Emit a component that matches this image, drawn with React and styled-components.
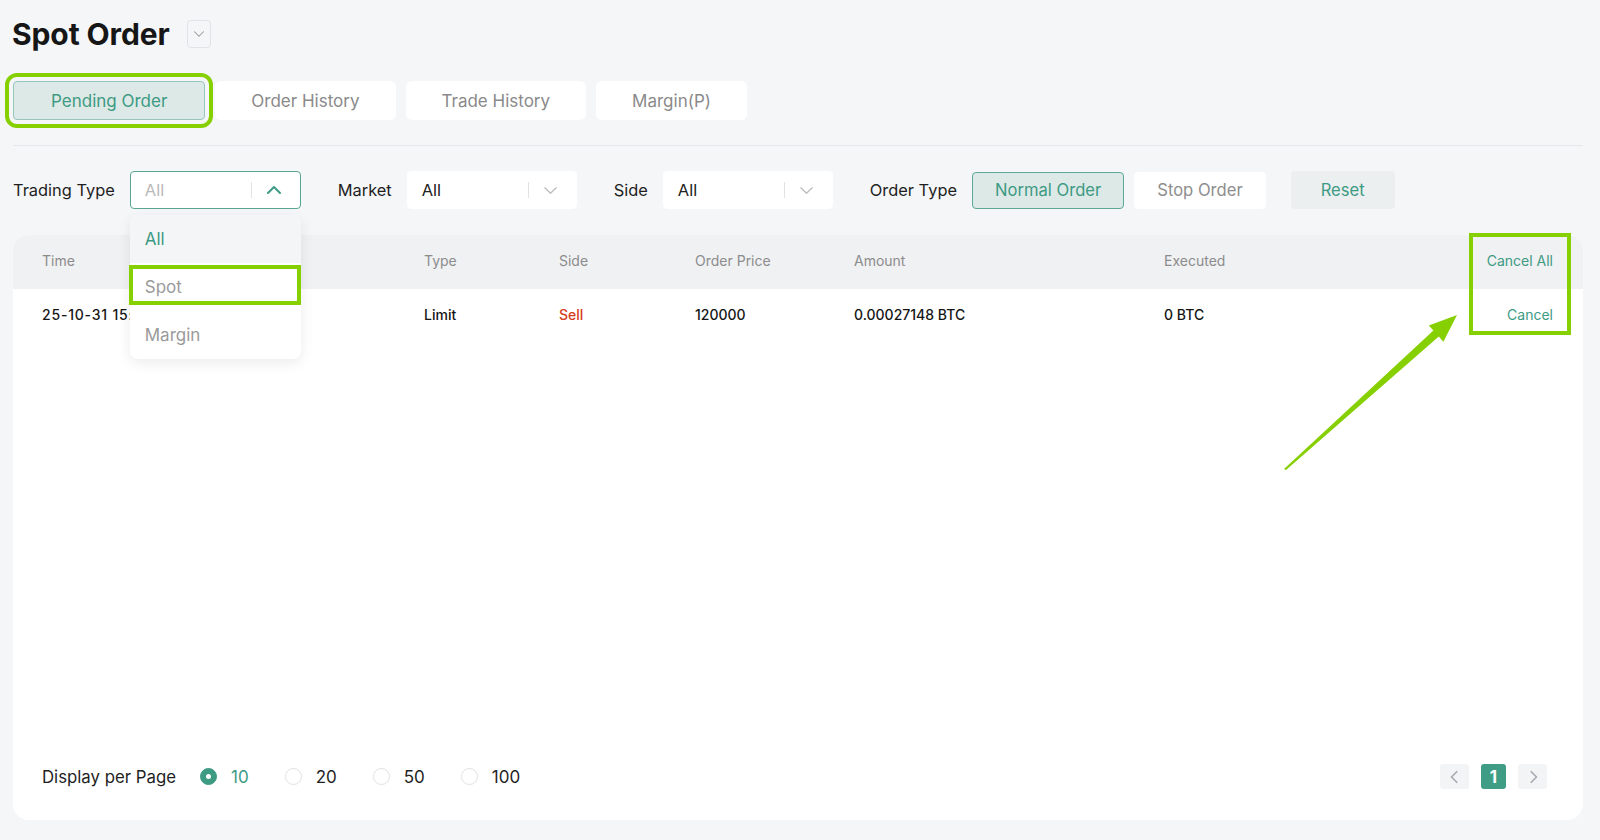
import React from 'react';
import styled, { createGlobalStyle, css } from 'styled-components';

const TEAL = '#3d9a83';
const MARK = '#86cf00';

const GlobalStyle = createGlobalStyle`
    html, body {
        margin: 0;
        padding: 0;
        background: #f5f6f8;
        font-family: Inter, "Noto Sans", sans-serif;
        color: #1c1c1c;
    }
`;

const Chevron = ({ dir = 'down', size = 14, color = '#bbb', width = 1.6 }) => (
    <svg width={size} height={size} viewBox="0 0 16 16" fill="none">
        {dir === 'down' && <polyline points="2,5 8,11 14,5" stroke={color} strokeWidth={width} strokeLinecap="round" strokeLinejoin="round" />}
        {dir === 'up' && <polyline points="2,11 8,5 14,11" stroke={color} strokeWidth={width} strokeLinecap="round" strokeLinejoin="round" />}
        {dir === 'left' && <polyline points="10,2 4,8 10,14" stroke={color} strokeWidth={width} strokeLinecap="round" strokeLinejoin="round" />}
        {dir === 'right' && <polyline points="6,2 12,8 6,14" stroke={color} strokeWidth={width} strokeLinecap="round" strokeLinejoin="round" />}
    </svg>
);

const tabs = ['Pending Order', 'Order History', 'Trade History', 'Margin(P)'];

const columns = [
    { key: 'time', label: 'Time' },
    { key: 'pair', label: 'Pair' },
    { key: 'type', label: 'Type' },
    { key: 'side', label: 'Side' },
    { key: 'price', label: 'Order Price' },
    { key: 'amount', label: 'Amount' },
    { key: 'executed', label: 'Executed' },
];

const orders = [
    {
        time: '25-10-31 15:42:18',
        pair: 'BTC/USDT',
        type: 'Limit',
        side: 'Sell',
        price: '120000',
        amount: '0.00027148 BTC',
        executed: '0 BTC',
    },
];

const App = () => {
    return (
        <>
            <GlobalStyle />
            <Page>
                <TitleRow>
                    <Title>Spot Order</Title>
                    <TitleToggle>
                        <Chevron dir="down" size={12} color="#999" width={1.4} />
                    </TitleToggle>
                </TitleRow>

                <Tabs>
                    {tabs.map((t, i) => (
                        <Tab key={t} $active={i === 0} $marked={i === 0}>{t}</Tab>
                    ))}
                </Tabs>

                <Divider />

                <Filters>
                    <FilterGroup>
                        <Label>Trading Type</Label>
                        <Select $open $width={171}>
                            <SelectValue $muted>All</SelectValue>
                            <SelectSep />
                            <SelectIcon>
                                <Chevron dir="up" size={16} color={TEAL} width={2} />
                            </SelectIcon>
                            <Dropdown>
                                <Option $selected>All</Option>
                                <Option $marked>Spot</Option>
                                <Option>Margin</Option>
                            </Dropdown>
                        </Select>
                    </FilterGroup>
                    <FilterGroup>
                        <Label>Market</Label>
                        <Select $width={170}>
                            <SelectValue>All</SelectValue>
                            <SelectSep />
                            <SelectIcon>
                                <Chevron dir="down" size={15} color="#bdbdbd" width={1.4} />
                            </SelectIcon>
                        </Select>
                    </FilterGroup>
                    <FilterGroup>
                        <Label>Side</Label>
                        <Select $width={170}>
                            <SelectValue>All</SelectValue>
                            <SelectSep />
                            <SelectIcon>
                                <Chevron dir="down" size={15} color="#bdbdbd" width={1.4} />
                            </SelectIcon>
                        </Select>
                    </FilterGroup>
                    <FilterGroup>
                        <Label>Order Type</Label>
                        <ButtonSet>
                            <TypeButton $active>Normal Order</TypeButton>
                            <TypeButton>Stop Order</TypeButton>
                        </ButtonSet>
                    </FilterGroup>
                    <ResetButton>Reset</ResetButton>
                </Filters>

                <Card>
                    <TableHead>
                        {columns.map(c => (
                            <HeadCell key={c.key}>{c.label}</HeadCell>
                        ))}
                        <HeadCell $action>Cancel All</HeadCell>
                    </TableHead>
                    {orders.map((o, i) => (
                        <TableRow key={i}>
                            {columns.map(c => (
                                <Cell
                                    key={c.key}
                                    $time={c.key === 'time'}
                                    $sell={c.key === 'side' && o.side === 'Sell'}
                                >
                                    {o[c.key]}
                                </Cell>
                            ))}
                            <Cell $action>Cancel</Cell>
                        </TableRow>
                    ))}
                    <Spacer />
                    <Footer>
                        <PerPage>
                            <PerPageLabel>Display per Page</PerPageLabel>
                            {[10, 20, 50, 100].map(n => (
                                <RadioItem key={n} $checked={n === 10}>
                                    <Radio $checked={n === 10} />
                                    {n}
                                </RadioItem>
                            ))}
                        </PerPage>
                        <Pager>
                            <PageArrow>
                                <Chevron dir="left" size={14} color="#a9a9b3" width={2} />
                            </PageArrow>
                            <PageNumber>1</PageNumber>
                            <PageArrow>
                                <Chevron dir="right" size={14} color="#a9a9b3" width={2} />
                            </PageArrow>
                        </Pager>
                    </Footer>

                    <ActionMark />
                    <PointerArrow width="176" height="158" viewBox="0 0 176 158">
                        <polygon
                            points="1,156 3,157 155.8,23.6 160.4,28.8 174,2 145.8,12.4 150.4,17.6"
                            fill={MARK}
                        />
                    </PointerArrow>
                </Card>
            </Page>
        </>
    );
};

const Page = styled.div`
    padding: 0 17px 0 13px;
    min-height: 840px;
    box-sizing: border-box;
`;

const TitleRow = styled.div`
    display: flex;
    align-items: center;
    gap: 17px;
    padding-top: 20px;
    height: 28px;
`;

const Title = styled.h1`
    margin: 0 0 0 -1px;
    font-size: 30px;
    font-weight: 700;
    color: #161616;
    letter-spacing: -0.1px;
`;

const TitleToggle = styled.div`
    width: 24px;
    height: 28px;
    box-sizing: border-box;
    border: 1px solid #e2e3e6;
    border-radius: 4px;
    display: flex;
    align-items: center;
    justify-content: center;
`;

const Tabs = styled.div`
    display: flex;
    gap: 10px;
    margin-top: 33px;
`;

const Tab = styled.div`
    position: relative;
    height: 39px;
    box-sizing: border-box;
    padding: 0 35px;
    display: flex;
    align-items: center;
    border-radius: 6px;
    font-size: 17px;
    background: #fff;
    color: #8a8a8a;
    border: 1px solid transparent;

    ${props => props.$active && css`
        background: #dde9e7;
        color: ${TEAL};
        border-color: #97c6bb;
    `}

    ${props => props.$marked && css`
        padding: 0 37px;
        outline: 4px solid ${MARK};
        outline-offset: 4px;
        border-radius: 4px;
    `}
`;

const Divider = styled.div`
    height: 1px;
    background: #e6e7ea;
    margin-top: 25px;
`;

const Filters = styled.div`
    display: flex;
    align-items: center;
    gap: 37px;
    margin-top: 25px;
    height: 38px;
`;

const FilterGroup = styled.div`
    display: flex;
    align-items: center;
    gap: 15px;
`;

const Label = styled.span`
    font-size: 16.4px;
    color: #1f1f1f;
`;

const Select = styled.div`
    position: relative;
    width: ${props => props.$width}px;
    height: 38px;
    box-sizing: border-box;
    display: flex;
    align-items: center;
    padding: 0 18px 0 14px;
    background: #fff;
    border-radius: 4px;
    border: 1px solid ${props => (props.$open ? '#5aa692' : '#fff')};
`;

const SelectValue = styled.span`
    flex: 1;
    font-size: 16.5px;
    color: ${props => (props.$muted ? '#b9b9b9' : '#222')};
`;

const SelectSep = styled.span`
    width: 1px;
    height: 16px;
    background: #e2e2e2;
    margin-right: 14px;
`;

const SelectIcon = styled.span`
    display: flex;
    align-items: center;
`;

const Dropdown = styled.div`
    position: absolute;
    top: 43px;
    left: -1px;
    width: 171px;
    background: #fff;
    border-radius: 8px;
    box-shadow: 0 4px 14px rgba(0, 0, 0, 0.08);
    z-index: 5;
`;

const Option = styled.div`
    position: relative;
    height: 48px;
    display: flex;
    align-items: center;
    padding: 0 15px;
    font-size: 17px;
    color: #9a9a9a;

    ${props => props.$selected && css`
        color: ${TEAL};
        background: #f4f5f7;
        border-radius: 8px 8px 0 0;
    `}

    ${props => props.$marked && css`
        &::after {
            content: '';
            position: absolute;
            top: 2px;
            bottom: 6px;
            left: -1px;
            right: 0;
            border: 4px solid ${MARK};
        }
    `}
`;

const ButtonSet = styled.div`
    display: flex;
    gap: 10px;
`;

const TypeButton = styled.div`
    height: 37px;
    box-sizing: border-box;
    padding: 0 22px;
    display: flex;
    align-items: center;
    border-radius: 4px;
    font-size: 16.6px;
    background: #fff;
    color: #8e8e8e;
    border: 1px solid #fff;

    ${props => props.$active && css`
        background: #dde9e7;
        color: ${TEAL};
        border-color: #5ea996;
    `}
`;

const ResetButton = styled.div`
    margin-left: -12px;
    width: 104px;
    height: 38px;
    display: flex;
    align-items: center;
    justify-content: center;
    border-radius: 4px;
    background: #ebeff0;
    color: ${TEAL};
    font-size: 16.6px;
`;

const Card = styled.div`
    position: relative;
    margin-top: 26px;
    height: 585px;
    background: #fff;
    border-radius: 16px;
    display: flex;
    flex-direction: column;
`;

const grid = css`
    display: grid;
    grid-template-columns: 170px 212px 135px 136px 159px 310px 1fr 120px;
    align-items: center;
    padding: 0 30px 0 29px;
`;

const TableHead = styled.div`
    ${grid}
    height: 54px;
    box-sizing: border-box;
    padding-bottom: 3px;
    background: #f0f1f3;
    border-radius: 16px 16px 0 0;
`;

const HeadCell = styled.div`
    font-size: 14px;
    color: #8c8c8c;
    white-space: nowrap;

    ${props => props.$action && css`
        text-align: right;
        color: ${TEAL};
    `}
`;

const TableRow = styled.div`
    ${grid}
    height: 50px;
`;

const Cell = styled.div`
    font-size: 14px;
    font-weight: 500;
    color: ${props => (props.$sell ? '#d63c20' : '#151515')};
    white-space: nowrap;
    overflow: hidden;
    letter-spacing: ${props => (props.$time ? '0.8px' : '0')};

    ${props => props.$action && css`
        text-align: right;
        color: ${TEAL};
        font-weight: 400;
    `}
`;

const Spacer = styled.div`
    flex: 1;
`;

const Footer = styled.div`
    display: flex;
    align-items: center;
    justify-content: space-between;
    padding: 0 36px 31px 29px;
    height: 25px;
`;

const PerPage = styled.div`
    display: flex;
    align-items: center;
    gap: 36px;
`;

const PerPageLabel = styled.span`
    font-size: 16.8px;
    color: #1f1f1f;
    margin-right: -12px;
`;

const RadioItem = styled.span`
    display: flex;
    align-items: center;
    gap: 14px;
    font-size: 17px;
    color: ${props => (props.$checked ? TEAL : '#1f1f1f')};
`;

const Radio = styled.span`
    width: 17px;
    height: 17px;
    box-sizing: border-box;
    border-radius: 50%;
    border: 1px solid #e1e1e1;
    background: #fff;
    display: flex;
    align-items: center;
    justify-content: center;

    ${props => props.$checked && css`
        background: ${TEAL};
        border-color: ${TEAL};
        &::after {
            content: '';
            width: 5px;
            height: 5px;
            border-radius: 50%;
            background: #fff;
        }
    `}
`;

const Pager = styled.div`
    display: flex;
    align-items: center;
    gap: 12px;
`;

const PageArrow = styled.div`
    width: 29px;
    height: 25px;
    border-radius: 3px;
    background: #f3f4f6;
    display: flex;
    align-items: center;
    justify-content: center;
`;

const PageNumber = styled.div`
    width: 25px;
    height: 25px;
    border-radius: 3px;
    background: #3f9d86;
    color: #fff;
    font-size: 17px;
    font-weight: 700;
    display: flex;
    align-items: center;
    justify-content: center;
`;

const ActionMark = styled.div`
    position: absolute;
    top: -2px;
    left: 1456px;
    width: 102px;
    height: 102px;
    box-sizing: border-box;
    border: 4px solid ${MARK};
    pointer-events: none;
`;

const PointerArrow = styled.svg`
    position: absolute;
    top: 78px;
    left: 1270px;
    pointer-events: none;
`;

export default App;
